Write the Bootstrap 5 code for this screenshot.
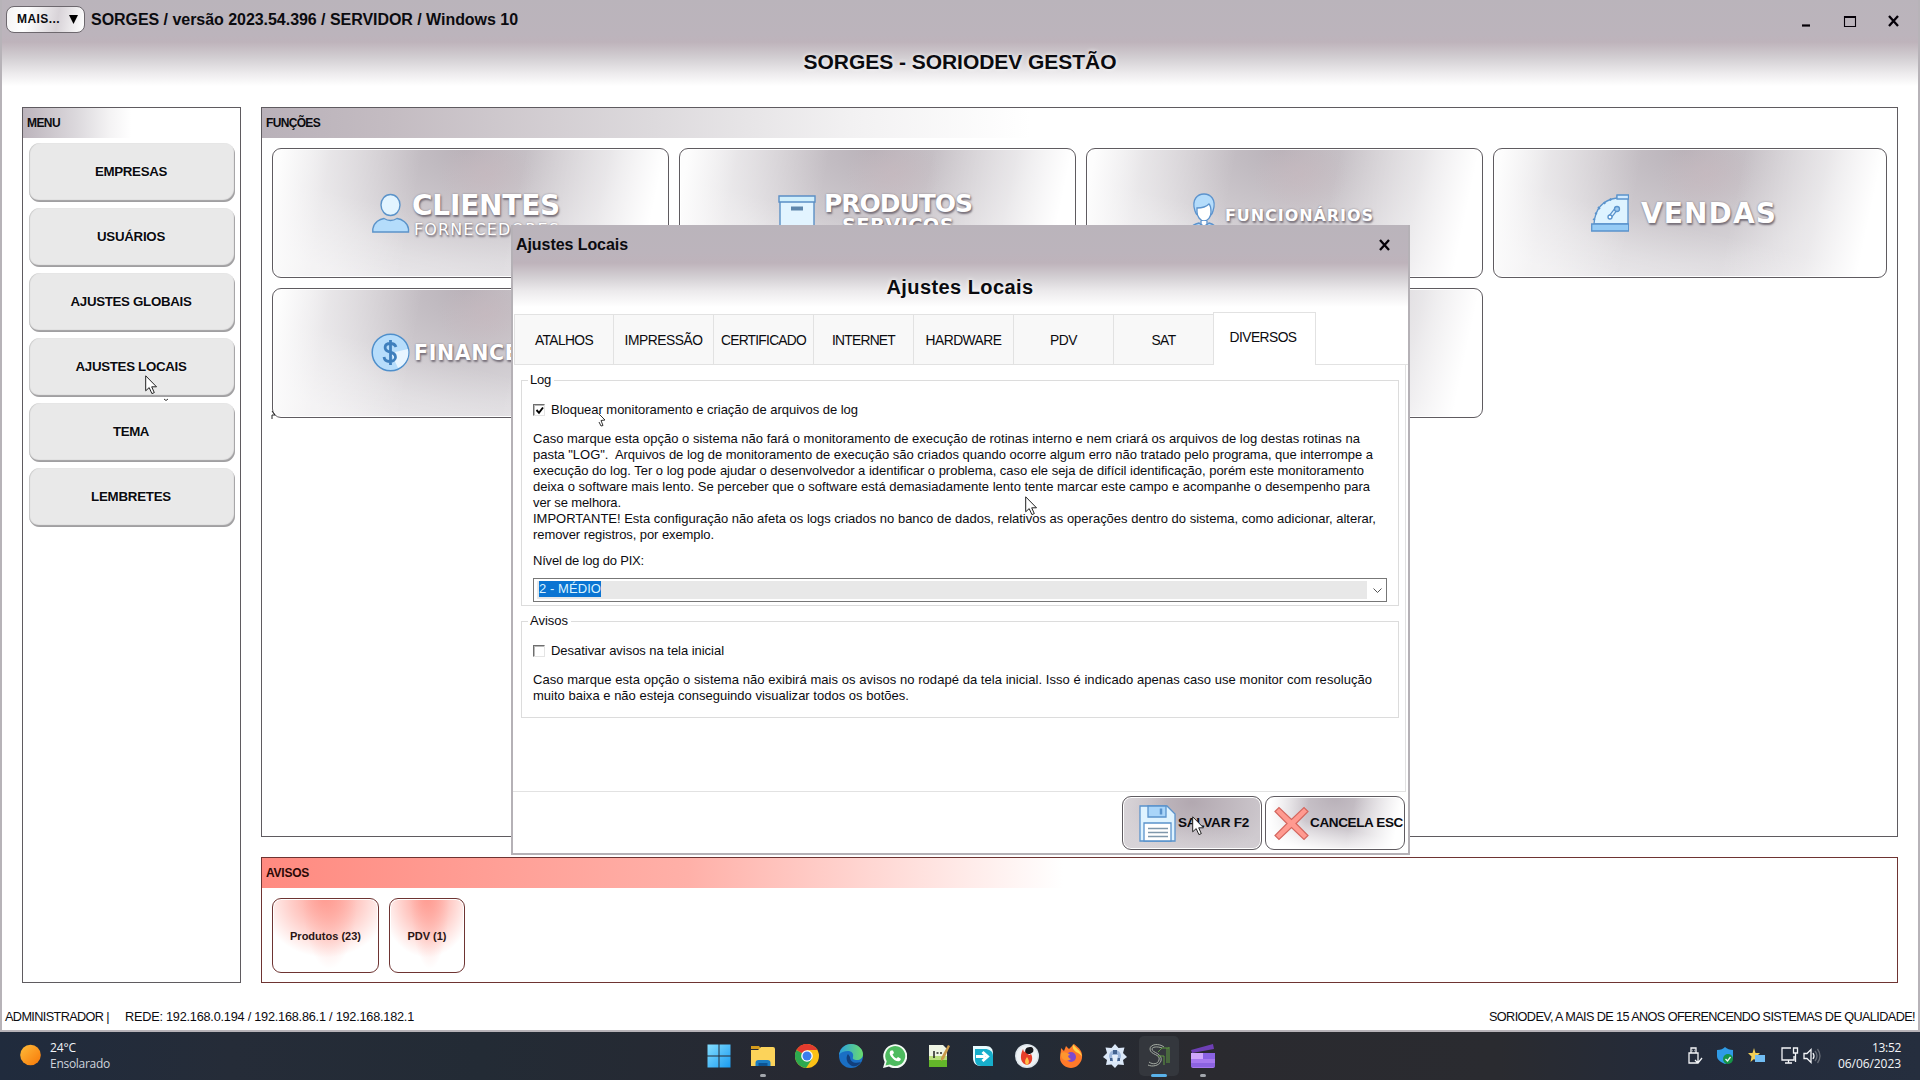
<!DOCTYPE html>
<html lang="pt-BR">
<head>
<meta charset="utf-8">
<title>SORGES - SORIODEV GESTÃO</title>
<link href="https://cdn.jsdelivr.net/npm/bootstrap@5.3.0/dist/css/bootstrap.min.css" rel="stylesheet">
<style>
body{width:1920px;height:1080px;overflow:hidden;background:#fff;color:#0b0b0f;font:13px/16px "Liberation Sans",Arial,sans-serif}
svg{display:block;flex:none}
[data-w]{white-space:pre}
.app-window{height:1032px;border:2px solid #b7b3b8;border-top:0;background:linear-gradient(#bab4bb 0,#bcb4bc 35px,#beb3bb 42px,#d3cfd3 58px,#eceaec 73px,#fff 86px)}
.app-header{height:107px}
.title-row{height:33px;padding:6px 10px 0 4px}
.more-btn{width:79px;height:27px;border:1px solid #6d686e;border-radius:8px;background:linear-gradient(100deg,#f4f3f4,#fff 25%,#d8d3d8 65%,#fff);font-weight:bold;font-size:12px;padding:0 6px 2px 10px}
.win-title{font-weight:bold;font-size:16px;line-height:27px}
.win-heading{font-weight:bold;font-size:21px;line-height:24px;text-shadow:0 0 4px #fff}
.app-main{height:876px;padding-left:20px;gap:20px}
.side-panel{width:219px;border:1px solid #5f5b60}
.panel-title{height:30px;padding-left:4px;font-weight:bold;font-size:12px;line-height:30px}
.side-panel .panel-title{background:linear-gradient(90deg,#bcb4bc,#dcd9dd 25%,#f4f3f4 40%,#fff 50%)}
.menu-list{padding:5px 5px 0 6px;gap:6px}
.menu-btn{height:59px;border:0;border-radius:11px;background:#e9e9e9;box-shadow:inset -1px -2px 1px #a09fa1,inset 1px 0 1px #c8c8c8;font-weight:bold;font-size:13.3px;padding:0 2px 1px 0;color:#0b0b0f;text-shadow:0 0 3px #fff}
.right-col{width:1637px;gap:20px}
.func-panel{height:730px;border:1px solid #5f5b60}
.func-panel .panel-title{background:linear-gradient(90deg,#b9b1b9 0,#c4bcc2 8%,#dddadd 24%,#f2f1f2 36%,#fff 47%)}
.func-grid{padding:10px;display:grid;grid-template-columns:397px 397px 397px 394px;grid-auto-rows:130px;gap:10px}
.func-card{border:1px solid #5f5b60;border-radius:9px;box-shadow:inset 0 0 0 1px #fff;background:
 linear-gradient(100deg,#fdfdfd 2%,rgba(255,255,255,.45) 14%,rgba(255,255,255,0) 36%),
 linear-gradient(102deg,rgba(255,255,255,0) 60%,rgba(255,255,255,.45) 80%,#fff 93%),
 linear-gradient(14deg,rgba(255,255,255,.4) 10%,rgba(255,255,255,0) 44%),
 radial-gradient(ellipse 48px 40px at 54% 20%,rgba(200,184,190,.55),rgba(200,184,190,0)),
 radial-gradient(ellipse 220px 160px at 49% 0,#b9b2b9 0,#cac5ca 38%,#d9d6da 72%,#dfdce0 100%)}
.func-label{font-family:"DejaVu Sans",Verdana,sans-serif;font-weight:bold;color:#fff;text-shadow:1px 2px 2px #77707a,0 0 2px #89828b}
.sz-xl{font-size:28px;line-height:26px}.sz-lg{font-size:25px;line-height:22px}.sz-md{font-size:19.5px;line-height:22px}.sz-sm{font-size:16px;line-height:20px}
.alert-panel{height:126px;border:1px solid #6e3432}
.alert-panel .panel-title{background:linear-gradient(90deg,#ff8a80 0,#ffb0a8 26%,#fff 49%);color:#2a0906}
.alert-card{height:75px;border:1px solid #6e3432;border-radius:9px;font-weight:bold;font-size:11px;box-shadow:inset 0 0 0 1px #fff;color:#2a1414;background:
 radial-gradient(ellipse 26% 96% at 54% 0,rgba(255,160,150,.6),rgba(255,255,255,0)),
 radial-gradient(ellipse 62% 80% at 50% 0,#ff9a90,#ffd0cb 55%,#fff)}
.card-a{width:107px}.card-b{width:76px}
.status-line{padding:26px 3px 0 3px;font-size:12.7px}

.dialog-box{position:absolute;left:511px;top:225px;width:899px;height:630px;border:2px solid #b5b1b6;border-top:0;background:linear-gradient(#bab4bb 0,#bcb4bc 28px,#beb3bb 38px,#d3cfd3 52px,#eceaec 66px,#fff 82px)}
.dialog-top{height:89px}
.tab-strip{height:51px;padding-left:1px}
.tab-strip .tab-cell{width:100px;height:51px;border:1px solid #e2e2e2;border-left-width:0;background:#f8f8f8;font-size:13.8px;padding-top:2px}
.tab-strip .tab-cell:first-child{border-left-width:1px}
.tab-strip .tab-cell.current{width:103px;height:53px;margin-top:-2px;border-left-width:1px;border-bottom:0;background:#fff;padding:0 3px 2px 0;margin-left:-1px}
.tab-fill{border-bottom:1px solid #e2e2e2}
.tab-body{height:427px;width:893px;border:1px solid #e2e2e2;border-top:0;border-left:0;padding:15px 6px 0 8px;background:#fff}
.group-box{border:1px solid #dcdcdc;padding:0 11px;position:relative}
.group-log{height:226px}
.group-avisos{height:97px;margin-top:15px}
.group-legend{display:table;margin-top:-9px;margin-left:-5px;padding:0 3px 0 2px;background:#fff}
.tick-box{width:12px;height:12px;border:1px solid #e4e4e4;border-top:1px solid #6e6e6e;border-left:1px solid #6e6e6e;box-shadow:inset 1px 1px 0 #b9b9b9}
.tick-row{margin-top:14px;height:16px;gap:6px}
.help-text{margin-top:13px;line-height:16px}
.help-text>div{height:16px}
.combo{margin-top:9px;height:24px;width:854px;border:1px solid #777;padding:2px 3px;background:#fff}
.combo-fill{width:830px;background:#e8e8e8;height:18px;padding-left:2px}
.combo-sel{background:#0a74d2;color:#d9f2ff;height:16px;line-height:16px}
.dialog-foot{padding:4px 3px 0 0;gap:3px}
.cmd-btn{width:140px;height:54px;border:1px solid #5f5b60;border-radius:9px;font-weight:bold;font-size:13.5px;box-shadow:inset 0 0 0 1px #fff;white-space:nowrap}
.cmd-save{padding-left:16px;gap:2px;background:linear-gradient(100deg,#d8d4d8,rgba(255,255,255,0) 30%),linear-gradient(12deg,#d9d5d9,rgba(255,255,255,0) 50%),radial-gradient(ellipse 80px 55px at 50% 10%,#b2a8b0,#cfcacf)}
.cmd-cancel{padding-left:8px;gap:1px;background:linear-gradient(102deg,rgba(255,255,255,0) 60%,#fff 92%),linear-gradient(98deg,#fff 4%,rgba(255,255,255,0) 30%),linear-gradient(12deg,#fff 8%,rgba(255,255,255,0) 45%),radial-gradient(ellipse 80px 60px at 50% 0,#b8b0b8,#dedbdf)}
.pointer{position:absolute}

.task-bar{height:48px;background:linear-gradient(90deg,#202b3d 0,#252c38 12%,#232b35 25%,#272932 42%,#222b37 52%,#2a2a2f 62%,#2a2b30 78%,#232b3b 88%,#252e3e 100%);color:#f3f5f8;font-family:"Open Sans","Noto Sans",sans-serif;font-size:12px}
.weather{width:697px;padding-left:20px;gap:9px}
.task-icons{width:680px;gap:0}
.task-slot{width:44px;height:48px;position:relative}
.task-slot svg{margin:0 auto}
.run-dot{position:absolute;left:19px;bottom:3px;width:6px;height:3px;border-radius:2px;background:#a3a7ad}
.run-live{left:14px;width:16px;background:#59b2ea}
.slot-live{background:#34373d;border-radius:5px;width:40px;height:40px;margin:0 2px}
.slot-live .run-dot{left:12px;bottom:-1px}
.tray{margin-left:auto;padding-right:19px}
</style>
</head>
<body class="d-flex flex-column">
<div class="app-window d-flex flex-column">
  <header class="app-header">
    <div class="title-row d-flex">
      <div class="more-btn d-flex align-items-center justify-content-between"><span data-w="43">MAIS...</span><svg width="9" height="10"><path d="M0 1h9L4.5 10z" fill="#000"/></svg></div>
      <div class="win-title" style="margin-left:6px"><span data-w="427">SORGES / versão 2023.54.396 / SERVIDOR / Windows 10</span></div>
      <svg class="ms-auto" width="112" height="26" fill="none" stroke="#050008"><path d="M15 19.500h8" stroke-width="2.200" transform="translate(-9)"/><path d="M48.500 10.500h11v10h-11z" stroke-width="1.100"/><path d="M48 11h12" stroke-width="2"/><path d="M93 10l9 10M102 10l-9 10" stroke-width="2.300"/></svg>
    </div>
    <div class="win-heading text-center" style="padding-top:17px"><span data-w="313">SORGES - SORIODEV GESTÃO</span></div>
  </header>
  <main class="app-main d-flex">
    <nav class="side-panel">
      <div class="panel-title"><span data-w="33">MENU</span></div>
      <div class="menu-list d-flex flex-column">
        <button class="menu-btn"><span data-w="72">EMPRESAS</span></button>
        <button class="menu-btn"><span data-w="68">USUÁRIOS</span></button>
        <button class="menu-btn"><span data-w="121">AJUSTES GLOBAIS</span></button>
        <button class="menu-btn"><span data-w="111">AJUSTES LOCAIS</span></button>
        <button class="menu-btn"><span data-w="36">TEMA</span></button>
        <button class="menu-btn"><span data-w="80">LEMBRETES</span></button>
      </div>
    </nav>
    <div class="right-col d-flex flex-column">
      <section class="func-panel">
        <div class="panel-title"><span data-w="54">FUNÇÕES</span></div>
        <div class="func-grid">
          <div class="func-card d-flex" style="padding:43px 0 0 99px">
            <svg width="38" height="42" viewBox="0 0 38 42" stroke="#5b93c9" stroke-width="1.400"><ellipse cx="18.500" cy="13" rx="9.500" ry="10.500" fill="#e2f4ff"/><path d="M.8 40V37C2 30 8 27 12 26.500c4 2.500 9 2.500 13 0C30 27 36 31 36.500 37v3z" fill="#b4dcfb"/></svg>
            <div class="func-label" style="padding:1px 0 0 2px"><div class="sz-xl"><span data-w="148">CLIENTES</span></div><div class="sz-sm fw-normal" style="padding:1px 0 0 2px"><span data-w="146">FORNECEDORES</span></div></div>
          </div>
          <div class="func-card d-flex" style="padding:46px 0 0 98px">
            <svg width="38" height="42" viewBox="0 0 38 42" stroke="#5b8fc5" stroke-width="1.400"><path d="M2 6h34v34H2z" fill="#e2f4ff"/><path d="M1 1h36v6H1z" fill="#d0effc"/><path d="M13 13.500h12" stroke-width="4" stroke="#5f86ab"/></svg>
            <div class="func-label text-center" style="padding:0 0 0 8px;margin-top:-2px"><div class="sz-lg"><span data-w="148">PRODUTOS</span></div><div class="sz-md"><span data-w="112">SERVIÇOS</span></div></div>
          </div>
          <div class="func-card d-flex" style="padding:44px 0 0 103px">
            <svg width="28" height="42" viewBox="0 0 28 42" stroke="#5c93cd" stroke-width="1.300"><path d="M0 40c0-6 4-9 9-10l5 4 5-4c5 1 8 4 9 10z" fill="#aed8fb"/><path d="M5 18C1 6 8 1 14 1s13 5 9 17c-1 4-3 5-5 5H10c-3 0-4-2-5-5z" fill="#b4dcfb"/><path d="M7 15c6 0 10-2 12-4 2 2 2 4 2 8 0 5-3 9-7 9s-7-5-7-9z" fill="#fff"/><path d="M11 28v3l3 3 3-3v-3" fill="#fff"/></svg>
            <div class="func-label sz-sm" style="padding:13px 0 0 7px"><span data-w="149">FUNCIONÁRIOS</span></div>
          </div>
          <div class="func-card d-flex" style="padding:45px 0 0 97px">
            <svg width="38" height="38" viewBox="0 0 38 38" stroke="#5a93cc" stroke-width="1.300"><path d="M3 30C4 14 12 6 26 4V2h11v28z" fill="#def3ff"/><path d="M.7 30h37v7h-37z" fill="#95cbf5"/><path d="M26 1h11.500v4H26z" fill="#d0eaff"/><path d="M4 26l-2-1M6 20l-2-1M9 15l-2-2M14 10l-1-2M20 6.500l-1-2" stroke-width="1.800"/><path d="M19 23l7-9" stroke-width="4"/><path d="M19 23l7-9" stroke-width="1.500" stroke="#e2f4ff"/><circle cx="26" cy="15" r="2.500" fill="#9cc9ef"/><circle cx="19" cy="23" r="2" fill="#fff"/></svg>
            <div class="func-label sz-xl" style="padding:7px 0 0 12px"><span data-w="136">VENDAS</span></div>
          </div>
          <div class="func-card d-flex" style="padding:44px 0 0 98px">
            <svg width="40" height="40" viewBox="0 0 40 40"><circle cx="19.500" cy="19.500" r="18.300" fill="#b7ddfb" stroke="#4f8fcb" stroke-width="1.500"/><path d="M20 20L37 16a17 17 0 0 1-10 19z" fill="#e8f5ff"/><path d="M25 14c-1-3-3-3.500-5.500-3.500-7 0-7 7-1 8.500 8 1.500 8 9.500 0 9.500-3 0-5-1.500-5.500-4.500M19.500 7v25" fill="none" stroke="#3f7fbd" stroke-width="2.800"/></svg>
            <div class="func-label sz-md" style="padding:9px 0 0 3px;font-size:20.500px"><span data-w="148">FINANCEIRO</span></div>
          </div>
          <div class="func-card"></div>
          <div class="func-card"></div>
        </div>
      </section>
      <section class="alert-panel">
        <div class="panel-title"><span data-w="43">AVISOS</span></div>
        <div class="d-flex" style="padding:10px;gap:10px">
          <div class="alert-card card-a d-flex align-items-center justify-content-center"><span data-w="71">Produtos (23)</span></div>
          <div class="alert-card card-b d-flex align-items-center justify-content-center"><span data-w="39">PDV (1)</span></div>
        </div>
      </section>
    </div>
  </main>
  <footer class="status-line d-flex"><span data-w="104">ADMINISTRADOR |</span><span data-w="289" style="margin-left:16px">REDE: 192.168.0.194 / 192.168.86.1 / 192.168.182.1</span><span class="ms-auto" data-w="426">SORIODEV, A MAIS DE 15 ANOS OFERENCENDO SISTEMAS DE QUALIDADE!</span></footer>
</div>

<div class="dialog-box">
  <div class="dialog-top">
    <div class="d-flex" style="padding:6px 16px 0 3px"><div class="win-title"><span data-w="112">Ajustes Locais</span></div><svg class="ms-auto" width="15" height="27" fill="none" stroke="#050008" stroke-width="2.300"><path d="M3 9l9 10M12 9l-9 10"/></svg></div>
    <div class="win-heading text-center" style="padding:17px 1px 0 0;font-size:20px"><span data-w="147">Ajustes Locais</span></div>
  </div>
  <div class="tab-strip d-flex">
    <div class="tab-cell d-flex align-items-center justify-content-center"><span data-w="58">ATALHOS</span></div>
    <div class="tab-cell d-flex align-items-center justify-content-center"><span data-w="78">IMPRESSÃO</span></div>
    <div class="tab-cell d-flex align-items-center justify-content-center"><span data-w="85">CERTIFICADO</span></div>
    <div class="tab-cell d-flex align-items-center justify-content-center"><span data-w="63">INTERNET</span></div>
    <div class="tab-cell d-flex align-items-center justify-content-center"><span data-w="76">HARDWARE</span></div>
    <div class="tab-cell d-flex align-items-center justify-content-center"><span data-w="27">PDV</span></div>
    <div class="tab-cell d-flex align-items-center justify-content-center"><span data-w="24">SAT</span></div>
    <div class="tab-cell current d-flex align-items-center justify-content-center"><span data-w="67">DIVERSOS</span></div>
    <div class="tab-fill flex-grow-1"></div>
  </div>
  <div class="tab-body">
    <div class="group-box group-log">
      <div class="group-legend"><span data-w="21">Log</span></div>
      <div class="tick-row d-flex align-items-center"><div class="tick-box"><svg width="11" height="11"><path d="M2.500 5l2.500 2.800L9 2.500" fill="none" stroke="#000" stroke-width="1.900"/></svg></div><span data-w="307">Bloquear monitoramento e criação de arquivos de log</span></div>
      <div class="help-text">
        <div><span data-w="827">Caso marque esta opção o sistema não fará o monitoramento de execução de rotinas interno e nem criará os arquivos de log destas rotinas na</span></div>
        <div><span data-w="840">pasta "LOG".  Arquivos de log de monitoramento de execução são criados quando ocorre algum erro não tratado pelo programa, que interrompe a</span></div>
        <div><span data-w="831">execução do log. Ter o log pode ajudar o desenvolvedor a identificar o problema, caso ele seja de difícil identificação, porém este monitoramento</span></div>
        <div><span data-w="837">deixa o software mais lento. Se perceber que o software está demasiadamente lento tente marcar este campo e acompanhe o desempenho para</span></div>
        <div><span data-w="88">ver se melhora.</span></div>
        <div><span data-w="843">IMPORTANTE! Esta configuração não afeta os logs criados no banco de dados, relativos as operações dentro do sistema, como adicionar, alterar,</span></div>
        <div><span data-w="181">remover registros, por exemplo.</span></div>
      </div>
      <div style="margin-top:10px"><span data-w="111">Nível de log do PIX:</span></div>
      <div class="combo d-flex"><div class="combo-fill d-flex"><div class="combo-sel"><span data-w="62">2 - MÉDIO</span></div></div><svg class="ms-auto" width="9" height="18" style="margin-right:1px"><path d="M.5 7.500l4 4 4-4" fill="none" stroke="#555"/></svg></div>
    </div>
    <div class="group-box group-avisos">
      <div class="group-legend"><span data-w="38">Avisos</span></div>
      <div class="tick-row d-flex align-items-center"><div class="tick-box"></div><span data-w="173">Desativar avisos na tela inicial</span></div>
      <div class="help-text">
        <div><span data-w="839">Caso marque esta opção o sistema não exibirá mais os avisos no rodapé da tela inicial. Isso é indicado apenas caso use monitor com resolução</span></div>
        <div><span data-w="376">muito baixa e não esteja conseguindo visualizar todos os botões.</span></div>
      </div>
    </div>
  </div>
  <div class="dialog-foot d-flex justify-content-end">
    <div class="cmd-btn cmd-save d-flex align-items-center"><svg width="37" height="37" viewBox="0 0 37 37" stroke="#5a93cc" stroke-width="1.300"><path d="M1 1h27l8 8v27H1z" fill="#dff3ff"/><path d="M9 1h18v11H9z" fill="#a9d5f9"/><path d="M22 3.500v6" stroke-width="2.500"/><path d="M5 18h27v18H5z" fill="#fff"/><path d="M9 23.500h20M9 27.500h20M9 31.500h20" stroke="#7f97ab"/></svg><span data-w="71">SALVAR F2</span></div>
    <div class="cmd-btn cmd-cancel d-flex align-items-center"><svg width="35" height="35" viewBox="0 0 35 35"><path d="M1 5.500L5 1.500l12.500 12L30 1.500l4 4L22 17.500l12 12-4 4-12.500-12L5 33.500l-4-4 12-12z" fill="#ff9a90" stroke="#d4665e" stroke-width="1.200"/></svg><span data-w="93">CANCELA ESC</span></div>
  </div>
</div>

<svg class="pointer" style="left:145px;top:375px" width="13" height="20"><path d="M.7.800v15l3.500-3.200 2.700 6 2.400-1-2.600-5.800h4.800z" fill="#fff" stroke="#222"/></svg>
<svg class="pointer" style="left:163px;top:398px" width="7" height="4"><path d="M1 1l2 1.500L5 1" fill="none" stroke="#333"/></svg>
<svg class="pointer" style="left:271px;top:410px" width="6" height="10"><path d="M1 1l3 4H1v4" fill="none" stroke="#222"/></svg>
<svg class="pointer" style="left:598px;top:413px" width="9" height="14"><path d="M1 1l6 6-4 .5 2 5-2 .5-2-4" fill="#fff" stroke="#333"/></svg>
<svg class="pointer" style="left:1025px;top:496px" width="13" height="20"><path d="M.7.800v15l3.500-3.200 2.700 6 2.400-1-2.600-5.800h4.800z" fill="#fff" stroke="#222"/></svg>
<svg class="pointer" style="left:1192px;top:816px" width="13" height="20"><path d="M.7.800v15l3.500-3.200 2.700 6 2.400-1-2.600-5.800h4.800z" fill="#fff" stroke="#222"/></svg>

<div class="task-bar d-flex">
  <div class="weather d-flex"><svg width="21" height="46"><defs><linearGradient id="sun" x2="1" y2="1"><stop stop-color="#ffbd3a"/><stop offset="1" stop-color="#f77708"/></linearGradient></defs><circle cx="10.500" cy="23" r="10.300" fill="url(#sun)"/></svg><div style="padding-top:8px"><div><span data-w="26">24°C</span></div><div style="color:#cfd4dc"><span data-w="60">Ensolarado</span></div></div></div>
  <div class="task-icons d-flex align-items-center">
    <div class="task-slot d-flex align-items-center"><svg width="24" height="24"><defs><linearGradient id="w2" x2="1" y2="1"><stop stop-color="#84deff"/><stop offset="1" stop-color="#1a9bf0"/></linearGradient></defs><path d="M.5.500h11v11H.5zM12.500.500h11v11h-11zM.5 12.500h11v11H.5zM12.500 12.500h11v11h-11z" fill="url(#w2)"/></svg></div>
    <div class="task-slot d-flex align-items-center"><svg width="24" height="24"><path d="M0 2h8l2 3H0z" fill="#d49a1c"/><path d="M0 6h7l3-3h12a2 2 0 0 1 2 2v17H0z" fill="#fcd35a"/><path d="M4.500 22v-3a3 3 0 0 1 3-3h9a3 3 0 0 1 3 3v3z" fill="#1b7dc4"/><path d="M7.500 19h9v3h-9z" fill="#0c5494"/></svg><i class="run-dot"></i></div>
    <div class="task-slot d-flex align-items-center"><svg width="24" height="24"><circle cx="12" cy="12" r="12" fill="#fbc116"/><path d="M12 12l-10.400-6A12 12 0 0 0 11 24l6-9z" fill="#2da94f"/><path d="M2 5.500A12 12 0 0 1 22.400 6H12z" fill="#e33b2e"/><path d="M12 12L1.600 6A12 12 0 0 1 12 0z" fill="#e33b2e"/><circle cx="12" cy="12" r="5.800" fill="#fff"/><circle cx="12" cy="12" r="4.500" fill="#3b7ded"/></svg></div>
    <div class="task-slot d-flex align-items-center"><svg width="24" height="24"><defs><linearGradient id="ed"><stop stop-color="#2a9fe0"/><stop offset="1" stop-color="#6bdc6c"/></linearGradient></defs><circle cx="12" cy="12" r="12" fill="#1a6fc4"/><path d="M0 11C1 4 6 0 12 0c7 0 12 5 12 10 0 4-3 6-6 6-3 0-5-1-4-3 1-4-2-6-5-6-4 0-7 1-9 4z" fill="url(#ed)"/><path d="M9 10c-3 4-1 10 4 12 4 1 7-1 9-4-6 2-11 0-11-5z" fill="#123f7c"/></svg></div>
    <div class="task-slot d-flex align-items-center"><svg width="24" height="24"><path d="M0 24l1.700-6A12 12 0 1 1 6 22.500z" fill="#f4fbf5"/><path d="M2.500 21.500l1.200-4.300A10 10 0 1 1 7 20.500z" fill="#4dbb5f"/><path d="M8 6.500c-2 1.500-1.500 4 .5 6.500 2.500 3.500 6 5 8 4 1.500-1 1.500-2 1-2.500L15 13l-1.500 1.500c-2-1-3-2-4-4L11 9 10 6.500z" fill="#fff"/></svg></div>
    <div class="task-slot d-flex align-items-center"><svg width="24" height="24"><path d="M2 1h14l4 4v18H2z" fill="#eef4e4"/><path d="M2 15h18v8H2z" fill="#63b62a"/><path d="M2 12h18v4H2z" fill="#b9df7c"/><path d="M7 7v7M9.500 9h2M13 9h2" stroke="#222" stroke-width="1.500"/><path d="M14 14l7-13 2 1-6 13-3 2z" fill="#c99a4a"/></svg></div>
    <div class="task-slot d-flex align-items-center"><svg width="22" height="22"><path d="M1 1h13c5 0 7 3 7 8v12H9c-5 0-8-3-8-8z" fill="#e8fbff"/><path d="M3 4h10c4 0 8 2 8 7v10H9c-4 0-6-3-6-6z" fill="#17aecb"/><path d="M4 11.500h9M10.500 7l5 4.500-5 4.500" fill="none" stroke="#fff" stroke-width="3"/></svg></div>
    <div class="task-slot d-flex align-items-center"><svg width="24" height="24"><circle cx="12" cy="12" r="12" fill="#dce4ea"/><circle cx="12" cy="12" r="10.500" fill="#eef2f5"/><path d="M8 5c-4 8-2 15 4 16 6-1 6-8 4-11-2 2-3 1-3-2l1-3-5 3z" fill="#e8402a"/><path d="M11 9c-2-3 0-6 4-6 3 0 4 2 3 5-2 2-5 3-7 1z" fill="#17191d"/><path d="M12 13c-3 4-2 7 0 8 3-2 2-5 0-8z" fill="#ffc04a"/></svg></div>
    <div class="task-slot d-flex align-items-center"><svg width="24" height="24"><path d="M2 4l3 3 2-5 3 3 5-5c5 4 9 7 8 14-1 6-6 10-11 10S1 20 1 14C1 10 2 8 2 4z" fill="#ff7a2a"/><path d="M14 0c2 4 8 6 9 13-1-2-3-4-6-5-3-2-4-5-3-8z" fill="#ffd24a"/><circle cx="12" cy="13" r="5" fill="#7d4ad0"/><path d="M2 9c3-2 8 0 9 2-3 0-2 3 1 4-5 4-11 0-10-6z" fill="#ff962e"/></svg></div>
    <div class="task-slot d-flex align-items-center"><svg width="24" height="24"><path d="M12 0l3.500 4 6-.5L20 9l4 4-4 3 1 5-6-.5L12 24l-3.500-3.500L3 21l1-5-4-3 4-4-1.500-5.500 6 .5z" fill="#dbe8f8"/><circle cx="12" cy="12" r="6" fill="#9db6da"/><path d="M10 6h4v4h-4zM7 14h3v3H7zM14 14h3v3h-3z" fill="#42628f"/><path d="M9 11h6l-1 7h-4z" fill="#e4eefa"/></svg></div>
    <div class="task-slot slot-live d-flex align-items-center"><svg width="24" height="26" fill="none" stroke="#a6ada4" stroke-width="1"><path d="M17 4C12 0 3 1 3 6c0 6 11 5 9 11-1 4-6 5-10 2M15 5C10 3 5 4 5 6c0 4 11 4 9 12-2 5-9 6-13 4"/><path d="M20 5v15M22 4v16M11 9l4-4h7M11 13h6v9" stroke="#5f9a41"/></svg><i class="run-dot run-live"></i></div>
    <div class="task-slot d-flex align-items-center"><svg width="24" height="25"><path d="M0 6L22 0l1 5L1 9z" fill="#6e3fb5"/><path d="M0 9h24v13a2 2 0 0 1-2 2H2a2 2 0 0 1-2-2z" fill="#a678ee"/><path d="M0 9h12v6H0z" fill="#cfa7fb"/><path d="M12 9h12v6H12z" fill="#8a62e2"/><path d="M0 19h24v4H0z" fill="#7c55d8" opacity=".6"/></svg><i class="run-dot"></i></div>
  </div>
  <div class="tray d-flex align-items-center">
    <svg width="140" height="24" viewBox="0 0 140 24" fill="none" stroke="#f3f5f8" stroke-width="1.300"><path d="M3 9h9v10H3zM5 9V4h5v5M6.500 6.500h.5M8.500 6.500h.5M9 16l3 3 4-5"/><g stroke="none"><path d="M31 6c4 0 6-1 8-3 2 2 5 3 8 3v6c0 4-4 6-8 8-4-2-8-4-8-8z" fill="#2f9be6"/><circle cx="42" cy="15" r="5" fill="#169447"/><path d="M68 4l1.500 5 4.500 0-3.500 3.500 1 5.500-3.500-3-3.500 3 1-5.500-3.500-3.500h4.500z" fill="#f2cf56"/><path d="M69 11h10v7h-10z" fill="#71bdf3"/></g><path d="M39.500 15l2 2 3-4"/><path d="M105 4H96v12h12v-4M99 19h7M102.500 16v3M107.500 4h4v5h-4zM109.500 9v9"/><path d="M120 9.500h3l4-4v13l-4-4h-3zM129 9q2 3 0 6" transform="translate(-2)"/><path d="M129 7q4 5 0 10M131.500 5q5 7 0 14" stroke="#666b75"/></svg>
    <div class="text-end" style="margin-left:12px;padding-bottom:1px"><div><span data-w="29">13:52</span></div><div><span data-w="63">06/06/2023</span></div></div>
  </div>
</div>
<script src="https://cdn.jsdelivr.net/npm/bootstrap@5.3.0/dist/js/bootstrap.bundle.min.js"></script>
<script>
// Track each label so that it fills its nominal width.
document.querySelectorAll('[data-w]').forEach(function (el) {
  var w = +el.dataset.w, n = el.textContent.length;
  var gap = (w - el.getBoundingClientRect().width) / n;
  el.style.letterSpacing = gap.toFixed(3) + 'px';
});
</script>
</body>
</html>
